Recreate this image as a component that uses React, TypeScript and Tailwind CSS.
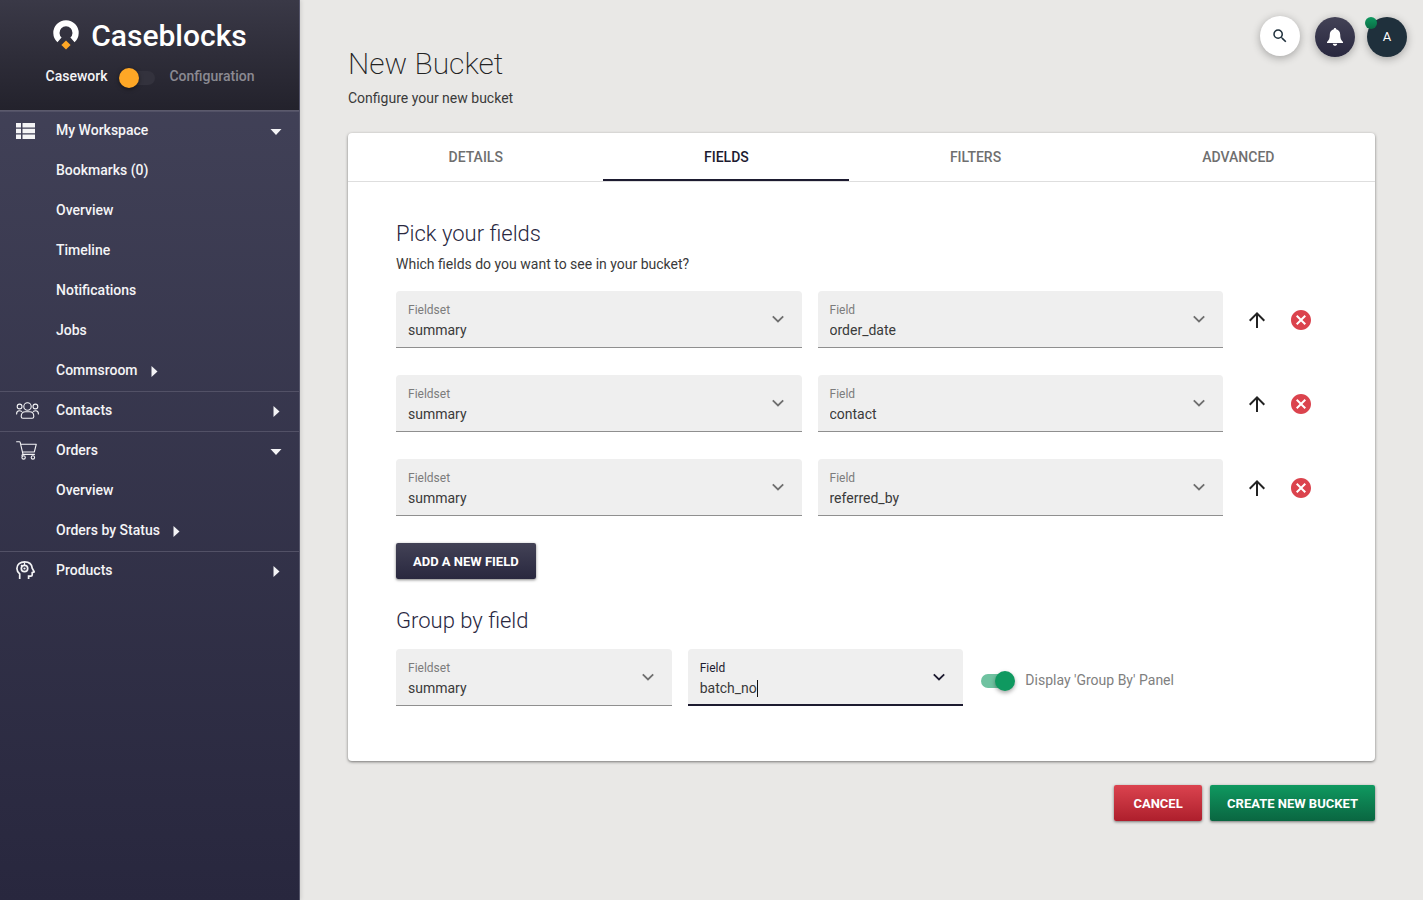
import { useState } from 'react';
import type { ReactNode } from 'react';
import { MdArrowUpward, MdCancel, MdSearch } from 'react-icons/md';

type Arrow = 'down' | 'right';

interface NavEntry {
  label: string;
  arrow?: Arrow;
}

interface NavSection extends NavEntry {
  icon: ReactNode;
  children: NavEntry[];
}

interface FieldRow {
  id: number;
  fieldset: string;
  field: string;
}

const TABS = ['Details', 'Fields', 'Filters', 'Advanced'];

const FIELDSETS = ['summary'];
const FIELDS = ['order_date', 'contact', 'referred_by', 'batch_no'];

function ListIcon() {
  return (
    <svg width="19" height="16" viewBox="0 0 19 16" fill="currentColor" aria-hidden="true">
      <path d="M0 0h5v4.5H0zM6.5 0H19v4.5H6.5zM0 5.8h5v4.4H0zM6.5 5.8H19v4.4H6.5zM0 11.5h5V16H0zM6.5 11.5H19V16H6.5z" />
    </svg>
  );
}

function PeopleIcon() {
  return (
    <svg width="23" height="17" viewBox="0 0 23 17" fill="none" stroke="currentColor" strokeWidth="1.1" strokeLinecap="round" aria-hidden="true">
      <circle cx="11.5" cy="4.5" r="3.7" />
      <circle cx="3.6" cy="4.5" r="2.4" />
      <circle cx="19.4" cy="4.5" r="2.4" />
      <path d="M5.2 14.4c0-3.2 1.6-4.6 4.2-4.6h4.2c2.6 0 4.2 1.4 4.2 4.6 0 1.2-.6 1.9-1.7 1.9H6.9c-1.1 0-1.7-.7-1.7-1.9z" />
      <path d="M.6 12c0-2.2 1-3.2 2.6-3.2 1 0 1.8.1 2.5.6M22.4 12c0-2.2-1-3.2-2.6-3.2-1 0-1.8.1-2.5.6" />
    </svg>
  );
}

function CartIcon() {
  return (
    <svg width="21" height="19" viewBox="0 0 21 19" fill="none" stroke="currentColor" strokeWidth="1.1" strokeLinecap="round" strokeLinejoin="round" aria-hidden="true">
      <path d="M.6.8h2.9c.4 0 .6.2.7.6L7 13.4M5 3.2h15.3l-2 7.8H6.5M7 13.4h11.4M7 13.4c-1.2.1-1.4 1.6-.3 1.9" />
      <circle cx="7.6" cy="16.4" r="1.7" />
      <circle cx="16.9" cy="16.4" r="1.7" />
    </svg>
  );
}

function HeadGearIcon() {
  return (
    <svg width="19" height="19" viewBox="0 0 19 19" fill="none" stroke="currentColor" strokeWidth="1.7" aria-hidden="true">
      <path d="M3.7 18v-5.2C1.9 11.3.9 9.6.9 7.4.9 3.5 4.2.9 8.6.9c4.3 0 7.2 2.2 7.6 6.3l2 3.6-2 .8v2.3c0 .9-.5 1.3-1.4 1.3h-2.2V18" />
      <circle cx="8.5" cy="7.5" r="3.2" />
      <circle cx="8.5" cy="7.5" r="1.1" fill="currentColor" stroke="none" />
      <path strokeWidth="1.2" d="M8.5 1.5v3M5 4l1.4 1.4" />
    </svg>
  );
}

function Logo() {
  return (
    <svg width="26" height="30" viewBox="0 0 26 30" aria-hidden="true">
      <path d="M6.5 19.9A9.6 9.6 0 1 1 19.5 19.9" fill="none" stroke="#fff" strokeWidth="6.2" />
      <path d="M13 20.4l4.6 4.6L13 29.6 8.4 25z" fill="#fea726" />
    </svg>
  );
}

const SECTIONS: NavSection[] = [
  {
    label: 'My Workspace',
    icon: <ListIcon />,
    arrow: 'down',
    children: [
      { label: 'Bookmarks (0)' },
      { label: 'Overview' },
      { label: 'Timeline' },
      { label: 'Notifications' },
      { label: 'Jobs' },
      { label: 'Commsroom', arrow: 'right' },
    ],
  },
  { label: 'Contacts', icon: <PeopleIcon />, arrow: 'right', children: [] },
  {
    label: 'Orders',
    icon: <CartIcon />,
    arrow: 'down',
    children: [{ label: 'Overview' }, { label: 'Orders by Status', arrow: 'right' }],
  },
  { label: 'Products', icon: <HeadGearIcon />, arrow: 'right', children: [] },
];

function Caret({ direction }: { direction: Arrow }) {
  return (
    <svg width="12" height="12" viewBox="0 0 12 12" fill="currentColor" aria-hidden="true">
      {direction === 'down' ? <path d="M.5 4h11L6 10z" /> : <path d="M3.5 1v11L9.500 6.500z" />}
    </svg>
  );
}

function Sidebar() {
  return (
    <aside className="w-[300px] shrink-0 flex flex-col text-[#f4f4f6] border-r border-[#55556a] shadow-[1px_0_4px_rgba(0,0,0,0.12)] bg-linear-to-b from-[#44445a] to-[#28273e]">
      <div className="h-[111px] flex flex-col items-center border-b border-[#5b5a6c] bg-linear-to-b from-[#3a3947] to-[#23222c]">
        <div className="flex items-center gap-3 pt-3.5 pl-px">
          <Logo />
          <span className="pt-0.5 text-[30px] leading-10 font-medium text-white">Caseblocks</span>
        </div>
        <label className="flex items-center pt-2 pl-px text-sm font-medium">
          Casework
          <input type="checkbox" role="switch" className="sr-only" />
          <span className="mx-3 pt-1 w-[38px] flex items-center">
            <span className="size-5 shrink-0 rounded-full bg-[#fea726] shadow-[0_1px_4px_rgba(0,0,0,0.5)] z-10" />
            <span className="-ml-2 h-3.5 w-6 rounded-full bg-[#33323d]" />
          </span>
          <span className="text-[#8b8a92]">Configuration</span>
        </label>
      </div>

      <nav className="text-sm font-medium">
        {SECTIONS.map((section) => (
          <div key={section.label}>
            <button
              type="button"
              aria-expanded={section.arrow === 'down'}
              className="w-full h-10 flex items-center pl-4 pr-[17px] pb-0.5 border-t border-[#525166] cursor-pointer"
            >
              <span className="w-10 flex">{section.icon}</span>
              <span className="flex-1 text-left pb-0.5">{section.label}</span>
              {section.arrow && <Caret direction={section.arrow} />}
            </button>
            {section.children.map((entry) => (
              <a key={entry.label} href="#" className="h-10 flex items-center gap-2.5 pl-14">
                <span className="pb-0.5">{entry.label}</span>
                {entry.arrow && <Caret direction={entry.arrow} />}
              </a>
            ))}
          </div>
        ))}
      </nav>
    </aside>
  );
}

function TopActions() {
  return (
    <div className="absolute top-4 right-4 flex items-start">
      <button
        type="button"
        aria-label="Search"
        className="size-10 mr-[15px] flex items-center justify-center rounded-full bg-white text-[#1f303c] shadow-[0_2px_8px_rgba(0,0,0,0.3)] cursor-pointer"
      >
        <MdSearch size={18} />
      </button>
      <button
        type="button"
        aria-label="Notifications"
        className="size-10 mt-px mr-3 flex items-center justify-center rounded-full text-white bg-linear-to-b from-[#434256] to-[#29283f] shadow-[0_2px_8px_rgba(0,0,0,0.3)] cursor-pointer"
      >
        <svg width="16" height="18" viewBox="0 0 16 18" fill="currentColor" aria-hidden="true">
          <path d="M8 0c.7 0 1.2.5 1.2 1.2 2.6.6 4 2.8 4 5.4 0 4 .8 5.7 2.8 7.4v.9H0V14c2-1.7 2.8-3.4 2.8-7.4 0-2.6 1.4-4.8 4-5.4C6.8.5 7.3 0 8 0zM5.8 15.7h4.4C10 17 9.1 17.8 8 17.8S6 17 5.8 15.7z" />
        </svg>
      </button>
      <button
        type="button"
        aria-label="Account"
        className="relative size-10 mt-px rounded-full bg-[#1f303c] text-white text-[13px] shadow-[0_2px_8px_rgba(0,0,0,0.3)] cursor-pointer"
      >
        A
        <span className="absolute top-0 -left-0.5 size-3 rounded-full bg-linear-to-b from-[#0f9960] to-[#0a6c45]" />
      </button>
    </div>
  );
}

function Chevron({ className }: { className: string }) {
  return (
    <svg className={className} width="12" height="8" viewBox="0 0 12 8" fill="none" stroke="currentColor" strokeWidth="1.8" aria-hidden="true">
      <path d="M.8 1.3L6 6.5l5.2-5.2" />
    </svg>
  );
}

interface SelectFieldProps {
  id: string;
  label: string;
  value: string;
  options: string[];
}

function SelectField({ id, label, value, options }: SelectFieldProps) {
  return (
    <div className="relative h-[57px] px-3 pt-2.5 rounded-t bg-[#efefef] border-b border-[#8f8f8f]">
      <label htmlFor={id} className="block text-xs leading-[18px] text-[#7c7c7c]">
        {label}
      </label>
      <select
        id={id}
        defaultValue={value}
        className="block w-full h-[22px] appearance-none bg-transparent text-sm text-[#3a3a3a] outline-none"
      >
        {options.map((option) => (
          <option key={option}>{option}</option>
        ))}
      </select>
      <Chevron className="absolute right-[18px] top-6 text-[#6f6f6f] pointer-events-none" />
    </div>
  );
}

// Filled field in its focused, type-to-search state
function SearchField({ id, label, value }: Omit<SelectFieldProps, 'options'>) {
  return (
    <div className="relative h-[57px] px-3 pt-2.5 rounded-t bg-[#efefef] border-b-2 border-[#1d1b30]">
      <label htmlFor={id} className="block text-xs leading-[18px] text-[#1d1b30]">
        {label}
      </label>
      <div className="flex items-center h-[22px]">
        <input
          id={id}
          type="text"
          role="combobox"
          aria-expanded={false}
          defaultValue={value}
          className="field-sizing-content bg-transparent text-sm text-[#3a3a3a] caret-transparent outline-none"
        />
        <span className="w-px h-[17px] bg-[#111]" />
      </div>
      <Chevron className="absolute right-[18px] top-6 text-[#1d1b30] pointer-events-none" />
    </div>
  );
}

export default function App() {
  const [activeTab, setActiveTab] = useState('Fields');
  const [showPanel, setShowPanel] = useState(true);
  const [rows, setRows] = useState<FieldRow[]>([
    { id: 1, fieldset: 'summary', field: 'order_date' },
    { id: 2, fieldset: 'summary', field: 'contact' },
    { id: 3, fieldset: 'summary', field: 'referred_by' },
  ]);

  const handleAdd = () => {
    setRows((prev) => [...prev, { id: Date.now(), fieldset: 'summary', field: 'batch_no' }]);
  };

  const handleRemove = (id: number) => {
    setRows((prev) => prev.filter((row) => row.id !== id));
  };

  const handleMoveUp = (index: number) => {
    if (index === 0) return;
    setRows((prev) => {
      const next = [...prev];
      [next[index - 1], next[index]] = [next[index], next[index - 1]];
      return next;
    });
  };

  return (
    <div className="relative min-h-screen flex bg-[#e9e8e6] font-[Roboto,sans-serif] text-[#3a3a3a]">
      <Sidebar />
      <TopActions />

      <main className="flex-1 min-w-0 px-12 pt-11">
        {/* Header */}
        <h1 className="text-[30px] leading-10 font-extralight text-[#222]">New Bucket</h1>
        <p className="text-sm pt-1">Configure your new bucket</p>

        <section className="mt-[25px] rounded bg-white shadow-[0_1px_3px_rgba(0,0,0,0.5)]">
          {/* Tabs */}
          <div role="tablist" className="flex border-b border-[#dedede]">
            {TABS.map((tab) => (
              <button
                key={tab}
                type="button"
                role="tab"
                aria-selected={tab === activeTab}
                onClick={() => setActiveTab(tab)}
                className={`flex-auto h-12 border-b-2 pt-0.5 text-sm font-medium uppercase cursor-pointer ${
                  tab === activeTab ? 'border-[#1d1b30] text-[#1d1b30]' : 'border-transparent text-[#6f6f6f]'
                }`}
              >
                {tab}
              </button>
            ))}
          </div>

          <div className="px-12 pt-9 pb-[55px]">
            <h2 className="text-[22px] leading-8 font-light text-[#29283f]">Pick your fields</h2>
            <p className="text-sm pt-1 pb-[17px]">Which fields do you want to see in your bucket?</p>

            <div className="flex flex-col gap-[27px]">
              {rows.map((row, index) => (
                <div key={row.id} className="flex items-center">
                  <div className="flex-1 grid grid-cols-2 gap-4">
                    <SelectField id={`fieldset-${row.id}`} label="Fieldset" value={row.fieldset} options={FIELDSETS} />
                    <SelectField id={`field-${row.id}`} label="Field" value={row.field} options={FIELDS} />
                  </div>
                  <div className="w-[104px] flex gap-5 pl-[22px]">
                    <button type="button" aria-label="Move up" onClick={() => handleMoveUp(index)} className="text-[#222] cursor-pointer">
                      <MdArrowUpward size={24} />
                    </button>
                    <button type="button" aria-label="Remove" onClick={() => handleRemove(row.id)} className="text-[#db434d] cursor-pointer">
                      <MdCancel size={24} />
                    </button>
                  </div>
                </div>
              ))}
            </div>

            <button
              type="button"
              onClick={handleAdd}
              className="mt-[27px] h-9 px-[17px] pt-0.5 rounded-xs text-[13px] font-bold uppercase text-white bg-linear-to-b from-[#434256] to-[#29283f] shadow-[0_1px_3px_rgba(0,0,0,0.5)] cursor-pointer"
            >
              Add a new field
            </button>

            <h2 className="pt-[26px] text-[22px] leading-8 font-light text-[#29283f]">Group by field</h2>
            <div className="mt-3 mr-[72px] grid grid-cols-3 gap-4">
              <SelectField id="group-fieldset" label="Fieldset" value="summary" options={FIELDSETS} />
              <SearchField id="group-field" label="Field" value="batch_no" />
              <label className="flex items-center pt-1.5 pl-0.5 text-sm text-[#808080] cursor-pointer">
                <input
                  type="checkbox"
                  role="switch"
                  checked={showPanel}
                  onChange={(e) => setShowPanel(e.target.checked)}
                  className="peer sr-only"
                />
                <span className="mr-2.5 flex items-center flex-row-reverse peer-not-checked:flex-row peer-not-checked:grayscale">
                  <span className="size-5 rounded-full bg-[#0f9960] shadow-[0_2px_4px_rgba(0,0,0,0.35)] z-10" />
                  <span className="h-3.5 w-6 -mr-2.5 rounded-full bg-[#6fc2a0]" />
                </span>
                <span className="pb-0.5">Display &apos;Group By&apos; Panel</span>
              </label>
            </div>
          </div>
        </section>

        {/* Actions */}
        <div className="flex justify-end gap-2 pt-6 pb-12">
          <button
            type="button"
            className="h-9 min-w-[88px] px-[17px] pt-0.5 rounded-xs text-[13px] font-bold uppercase text-white bg-linear-to-b from-[#db434f] to-[#ae1e2c] shadow-[0_1px_3px_rgba(0,0,0,0.5)] cursor-pointer"
          >
            Cancel
          </button>
          <button
            type="button"
            className="h-9 px-[17px] pt-0.5 rounded-xs text-[13px] font-bold uppercase text-white bg-linear-to-b from-[#0f9960] to-[#0a6641] shadow-[0_1px_3px_rgba(0,0,0,0.5)] cursor-pointer"
          >
            Create new bucket
          </button>
        </div>
      </main>
    </div>
  );
}
